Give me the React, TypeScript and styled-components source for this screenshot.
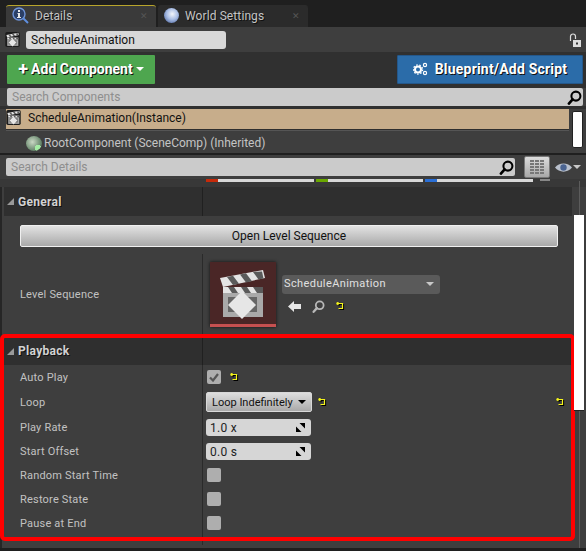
import React from 'react';
import styled, { createGlobalStyle } from 'styled-components';

const GlobalStyle = createGlobalStyle`
  html, body {
    margin: 0;
    padding: 0;
    background: #1f1f1f;
  }
  body {
    font-family: Roboto, "Liberation Sans", sans-serif;
    overflow: hidden;
  }
`;

const ResetArrow: React.FC = () => (
  <ResetIcon viewBox="0 0 9 9">
    <path d="M0.5 1.5h6v5h-4M0.5 1.5l2-1.5M0.5 1.5l2 1.5" fill="none" stroke="#000" strokeWidth="1.2" transform="translate(1 1)" />
    <path d="M0.5 1.5h6v5h-4M0.5 1.5l2-1.5M0.5 1.5l2 1.5" fill="none" stroke="#f4f41c" strokeWidth="1.2" />
  </ResetIcon>
);

const Loupe: React.FC<{ size: number; color?: string }> = ({ size, color = '#000' }) => (
  <svg width={size} height={size} viewBox="0 0 16 16">
    <circle cx="9.5" cy="6.5" r="4.8" fill="none" stroke={color} strokeWidth="2.2" />
    <path d="M6 10L2 14.5" stroke={color} strokeWidth="2.8" strokeLinecap="round" />
  </svg>
);

// same drawing for the small tree icons and the big thumbnail
const ClapperShapes: React.FC = () => (
  <>
    <path d="M10 16L53 8l2 8-42 9z" fill="#e4e4e4" />
    <path d="M17 15l6 8 6-1.300-6-8zM30 12.500l6 8 6-1.300-6-8zM43 10l5.500 7.500 5-1-1.500-7z" fill="#5a5a5a" />
    <path d="M13 31h40v24H13z" fill="#a9a9a9" />
    <path d="M13 25h40v6H13z" fill="#e4e4e4" />
    <path d="M18 25l4 6h6l-4-6zM31 25l4 6h6l-4-6zM43 25l4 6h6v-6z" fill="#5a5a5a" />
    <path d="M18 35h29v15H18z" fill="#666" />
    <path d="M32 29l14 14-14 14-14-14z" fill="#e6e6e6" />
  </>
);

const SmallClapper: React.FC = () => (
  <svg width="15" height="15" viewBox="6 5 52 54">
    <rect x="6" y="5" width="52" height="54" fill="#1c1c1c" rx="6" />
    <ClapperShapes />
  </svg>
);

const SmallCog: React.FC = () => (
  <svg width="15" height="14" viewBox="0 0 15 14">
    <circle cx="5" cy="7.500" r="3" fill="none" stroke="#fff" strokeWidth="2" />
    <circle cx="5" cy="7.500" r="4.600" fill="none" stroke="#fff" strokeWidth="1.200" strokeDasharray="1.600 1.600" />
    <circle cx="12" cy="3" r="1.600" fill="none" stroke="#fff" strokeWidth="1.200" />
    <circle cx="12" cy="11" r="1.600" fill="none" stroke="#fff" strokeWidth="1.200" />
  </svg>
);

const ResizeGrip: React.FC = () => (
  <GripIcon viewBox="0 0 9 9">
    <path d="M3.500 0H9v5.500zM5.500 9H0V3.500z" fill="#000" />
  </GripIcon>
);

const gridCells = [0, 1, 2, 3, 4].flatMap((row) =>
  [0, 1, 2].map((col) => ({ x: col * 5, y: row * 3 })),
);

const App: React.FC = () => {
  return (
    <Page>
      <GlobalStyle />
      <TabBar>
        <Tab active>
          <svg width="17" height="17" viewBox="0 0 17 17">
            <circle cx="7" cy="7" r="6" fill="#2b3f66" stroke="#6f94d8" strokeWidth="1.4" />
            <path d="M11 11l5 5" stroke="#5f8fe0" strokeWidth="2" />
            <path d="M6 3h2v2H6zM5.500 6H8v4h1v1H5v-1h1V7h-.5z" fill="#e8e8e8" />
          </svg>
          <TabLabel>Details</TabLabel>
          <TabClose>✕</TabClose>
        </Tab>
        <Tab>
          <Globe />
          <TabLabel>World Settings</TabLabel>
          <TabClose>✕</TabClose>
        </Tab>
      </TabBar>

      <NameRow>
        <SmallClapper />
        <NameInput>ScheduleAnimation</NameInput>
        <LockIcon viewBox="0 0 14 14">
          <path d="M2.500 8V3.500a2.500 2.500 0 0 1 5 0V6" fill="none" stroke="#ddd" strokeWidth="1.200" />
          <path d="M5 7h8v7H5z" fill="#ddd" />
          <path d="M8 9.500h2v2H8z" fill="#333" />
        </LockIcon>
      </NameRow>

      <ButtonRow>
        <AddButton>
          <PlusSign>+</PlusSign>
          Add Component
          <Caret color="#fff" />
        </AddButton>
        <BlueprintButton>
          <SmallCog />
          Blueprint/Add Script
        </BlueprintButton>
      </ButtonRow>

      <ComponentSearch>
        Search Components
        <Loupe size={15} />
      </ComponentSearch>

      <TreeArea>
        <TreeList>
          <SelectedRow>
            <SmallClapper />
            ScheduleAnimation(Instance)
          </SelectedRow>
          <RootRow>
            <SceneBall />
            RootComponent (SceneComp) (Inherited)
          </RootRow>
        </TreeList>
        <TreeScroll />
      </TreeArea>

      <DetailsBar>
        <DetailsSearch>
          Search Details
          <Loupe size={15} />
        </DetailsSearch>
        <GridToggle>
          <svg width="14" height="15" viewBox="0 0 14 15">
            {gridCells.map((c) => (
              <rect key={`${c.x}-${c.y}`} x={c.x} y={c.y} width="4" height="2" fill="#777" />
            ))}
          </svg>
        </GridToggle>
        <svg width="18" height="11" viewBox="0 0 18 11">
          <path d="M0 5.500C4 0 13 0 17 5.500 13 11 4 11 0 5.500z" fill="#b9c0cc" />
          <circle cx="8.500" cy="5.500" r="3.200" fill="#4a6390" />
        </svg>
        <Caret color="#c8c8c8" />
      </DetailsBar>

      <ChipStrip>
        <Chip color="#c62a0a" width={108} />
        <Chip color="#6aa800" width={107} />
        <Chip color="#2a6fd6" width={108} />
        <ChipStub />
      </ChipStrip>

      <Panel>
        <ScrollTrack />
        <SectionHeader>
          <Disclosure />
          <SectionName>General</SectionName>
        </SectionHeader>
        <OpenRow>
          <OpenButton>Open Level Sequence</OpenButton>
        </OpenRow>
        <SequenceRow>
          <PropName>Level Sequence</PropName>
          <SequenceValue>
            <Thumbnail>
              <svg width="66" height="62" viewBox="0 0 66 62">
                <ClapperShapes />
              </svg>
            </Thumbnail>
            <AssetColumn>
              <AssetCombo>
                ScheduleAnimation
                <Caret color="#c8c8c8" />
              </AssetCombo>
              <AssetTools>
                <svg width="13" height="11" viewBox="0 0 13 11">
                  <path d="M0 5.500L6 0v3h7v5H6v3z" fill="#e6e6e6" />
                </svg>
                <Loupe size={13} color="#b8b8b8" />
                <ResetArrow />
              </AssetTools>
            </AssetColumn>
          </SequenceValue>
        </SequenceRow>

        <PlaybackBlock>
          <PlaybackHeader>
            <Disclosure />
            <SectionName>Playback</SectionName>
          </PlaybackHeader>
          <PropRow>
            <PropName>Auto Play</PropName>
            <ValueCell>
              <CheckBox>
                <svg width="10" height="9" viewBox="0 0 10 9">
                  <path d="M1 4.500l3 3L9 1" fill="none" stroke="#555" strokeWidth="2.200" />
                </svg>
              </CheckBox>
              <ResetArrow />
            </ValueCell>
          </PropRow>
          <PropRow rowHeight={26}>
            <PropName>Loop</PropName>
            <ValueCell>
              <LoopSelect>
                Loop Indefinitely
                <Caret color="#000" />
              </LoopSelect>
              <ResetArrow />
              <FarReset>
                <ResetArrow />
              </FarReset>
            </ValueCell>
          </PropRow>
          <PropRow rowHeight={25}>
            <PropName>Play Rate</PropName>
            <ValueCell>
              <NumberBox>
                1.0 x
                <ResizeGrip />
              </NumberBox>
            </ValueCell>
          </PropRow>
          <PropRow rowHeight={23}>
            <PropName>Start Offset</PropName>
            <ValueCell>
              <NumberBox>
                0.0 s
                <ResizeGrip />
              </NumberBox>
            </ValueCell>
          </PropRow>
          <PropRow>
            <PropName>Random Start Time</PropName>
            <ValueCell>
              <CheckBox />
            </ValueCell>
          </PropRow>
          <PropRow>
            <PropName>Restore State</PropName>
            <ValueCell>
              <CheckBox />
            </ValueCell>
          </PropRow>
          <PropRow>
            <PropName>Pause at End</PropName>
            <ValueCell>
              <CheckBox />
            </ValueCell>
          </PropRow>
          <DividerTail tailHeight={6} />
          <RedFrame />
        </PlaybackBlock>
        <DividerTail tailHeight={4} />
        <PanelScroll />
      </Panel>
      <BottomStrip />
    </Page>
  );
};

export default App;

const Page = styled.div`
  width: 586px;
  height: 551px;
  overflow: hidden;
  background: #3e3e3e;
  display: flex;
  flex-direction: column;
`;

const TabBar = styled.div`
  height: 27px;
  flex: none;
  box-sizing: border-box;
  padding: 5px 0 0 6px;
  background: #1f1f1f;
  display: flex;
  gap: 2px;
`;

const Tab = styled.div<{ active?: boolean }>`
  width: 150px;
  box-sizing: border-box;
  padding: 0 8px 2px 6px;
  display: flex;
  align-items: center;
  gap: 6px;
  background: ${({ active }) => (active ? '#3a3a3a' : '#2b2b2b')};
  border-top: 1px solid ${({ active }) => (active ? '#b8a52c' : '#2b2b2b')};
  border-radius: 3px 3px 0 0;
`;

const TabLabel = styled.span`
  flex: 1;
  font-size: 12px;
  letter-spacing: 0.1px;
  color: #c4c4c4;
  text-shadow: 1px 1px 0 #111;
`;

const TabClose = styled.span`
  font-size: 9px;
  color: #555;
`;

const Globe = styled.span`
  width: 15px;
  height: 15px;
  border-radius: 50%;
  background: radial-gradient(circle at 55% 40%, #f2f5fb 0, #a9bde4 45%, #34508f 100%);
`;

const NameRow = styled.div`
  height: 25px;
  flex: none;
  box-sizing: border-box;
  padding: 0 4px 0 5px;
  display: flex;
  align-items: center;
  gap: 6px;
  background: #3e3e3e;
`;

const NameInput = styled.div`
  width: 200px;
  height: 18px;
  box-sizing: border-box;
  padding-left: 5px;
  background: #d8d8d8;
  border-radius: 3px;
  font-size: 12px;
  line-height: 18px;
  color: #111;
`;

const LockIcon = styled.svg`
  width: 14px;
  height: 14px;
  margin-left: auto;
`;

const ButtonRow = styled.div`
  height: 36px;
  flex: none;
  box-sizing: border-box;
  padding: 3px 3px 4px 7px;
  display: flex;
  justify-content: space-between;
  background: #303030;
`;

const ActionButton = styled.div`
  height: 29px;
  box-sizing: border-box;
  padding-bottom: 2px;
  display: flex;
  align-items: center;
  justify-content: center;
  font-size: 14px;
  font-weight: 700;
  color: #fff;
  text-shadow: 1px 1px 0 #111;
  border-radius: 1px;
`;

const AddButton = styled(ActionButton)`
  width: 148px;
  gap: 3px;
  background: #4ea64f;
`;

const BlueprintButton = styled(ActionButton)`
  width: 186px;
  gap: 7px;
  letter-spacing: 0.2px;
  background: #2b6ca9;
  border: 1px solid #24578a;
`;

const PlusSign = styled.span`
  font-size: 18px;
  line-height: 18px;
  font-weight: 700;
`;

const Caret = styled.span<{ color: string }>`
  width: 0;
  height: 0;
  border-left: 4px solid transparent;
  border-right: 4px solid transparent;
  border-top: 4px solid ${({ color }) => color};
`;

const SearchBox = styled.div`
  height: 18px;
  flex: none;
  box-sizing: border-box;
  display: flex;
  align-items: center;
  justify-content: space-between;
  padding: 0 1px 0 5px;
  background: #cbcbcb;
  border-radius: 2px;
  font-size: 12px;
  color: #8e8e8e;
`;

const ComponentSearch = styled(SearchBox)`
  margin: 0 3px 0 7px;
`;

const TreeArea = styled.div`
  display: flex;
  flex: none;
  height: 49px;
  background: #3e3e3e;
  border-top: 3px solid #303030;
  border-bottom: 2px solid #1f1f1f;
  box-sizing: border-box;
  padding: 0 3px 0 6px;
  gap: 3px;
`;

const TreeList = styled.div`
  flex: 1;
  display: flex;
  flex-direction: column;
`;

const SelectedRow = styled.div`
  height: 20px;
  box-sizing: border-box;
  padding-bottom: 3px;
  display: flex;
  align-items: center;
  gap: 7px;
  background: #c7ad8b;
  box-shadow: 0 1px 0 #2e2e2e, 0 2px 0 #555;
  font-size: 12px;
  color: #111;
`;

const RootRow = styled.div`
  flex: 1;
  display: flex;
  align-items: center;
  gap: 2px;
  padding: 4px 0 0 20px;
  font-size: 12px;
  color: #c4c4c4;
`;

const SceneBall = styled.span`
  width: 16px;
  height: 15px;
  border-radius: 50%;
  background:
    radial-gradient(circle at 12px 12px, #a4eda4 3px, transparent 3.500px),
    radial-gradient(circle at 40% 40%, #c9d8c4, #587a5e 75%);
`;

const TreeScroll = styled.div`
  width: 11px;
  margin: 2px 0 5px;
  background: #fff;
  border: 1px solid #222;
  border-radius: 2px;
  box-sizing: border-box;
`;

const DetailsBar = styled.div`
  height: 24px;
  flex: none;
  box-sizing: border-box;
  padding: 1px 3px 1px 6px;
  display: flex;
  align-items: center;
  background: #3e3e3e;
`;

const DetailsSearch = styled(SearchBox)`
  width: 509px;
`;

const GridToggle = styled.div`
  width: 26px;
  height: 22px;
  margin: 0 5px 0 9px;
  box-sizing: border-box;
  display: flex;
  align-items: center;
  justify-content: center;
  background: linear-gradient(#dcdcdc, #a8a8a8);
  border: 1px solid #777;
  border-radius: 2px;
`;

const ChipStrip = styled.div`
  height: 8px;
  flex: none;
  box-sizing: border-box;
  padding-left: 206px;
  display: flex;
  gap: 2px;
  background: #383838;
`;

const Chip = styled.span<{ color: string; width: number }>`
  width: ${({ width }) => width}px;
  height: 3px;
  background: linear-gradient(90deg, ${({ color }) => color} 12px, #d8d8d8 12px);
`;

const ChipStub = styled.span`
  width: 10px;
  height: 2px;
  margin-left: 5px;
  background: #888;
`;

const Panel = styled.div`
  position: relative;
  flex: 1;
  min-height: 0;
  padding: 0 14px 0 2px;
  border-left: 2px solid #262626;
  background: #3e3e3e;
`;

const ScrollTrack = styled.div`
  position: absolute;
  right: 6px;
  top: -6px;
  bottom: 0;
  width: 1px;
  background: #5c5c5c;
`;

const SectionHeader = styled.div`
  height: 29px;
  display: flex;
  align-items: center;
  gap: 4px;
  padding-left: 3px;
  background: #2f2f2f;
  background-image: linear-gradient(#202020, #202020);
  background-repeat: no-repeat;
  background-size: 1px 100%;
  background-position: 198px 0;
`;

const PlaybackHeader = styled(SectionHeader)`
  height: 27px;
  padding-bottom: 1px;
  box-sizing: border-box;
`;

const Disclosure = styled.span`
  width: 0;
  height: 0;
  border-left: 7px solid transparent;
  border-bottom: 7px solid #9a9a9a;
`;

const SectionName = styled.span`
  font-size: 12px;
  font-weight: 700;
  letter-spacing: 0.3px;
  color: #d2d2d2;
  text-shadow: 1px 1px 0 #111;
`;

const OpenRow = styled.div`
  padding: 9px 0 7px 16px;
`;

const OpenButton = styled.div`
  width: 538px;
  height: 22px;
  box-sizing: border-box;
  text-align: center;
  line-height: 20px;
  font-size: 12px;
  color: #111;
  background: linear-gradient(#e2e2e2, #a9a9a9);
  border: 1px solid #f0f0f0;
  border-radius: 2px;
`;

const SequenceRow = styled.div`
  height: 80px;
  display: flex;
  align-items: center;
`;

const PropName = styled.div`
  width: 182px;
  padding-left: 16px;
  font-size: 11px;
  letter-spacing: 0.2px;
  color: #c2c2c2;
`;

const SequenceValue = styled.div`
  flex: 1;
  display: flex;
  align-items: center;
  gap: 6px;
  height: 100%;
  padding-left: 7px;
  border-left: 1px solid #2a2a2a;
`;

const Thumbnail = styled.div`
  width: 66px;
  height: 65px;
  box-sizing: border-box;
  display: flex;
  align-items: center;
  justify-content: center;
  background: #4a2626;
  border-bottom: 3px solid #c65050;
  box-shadow: 0 0 3px #111;
`;

const AssetColumn = styled.div`
  display: flex;
  flex-direction: column;
  gap: 6px;
`;

const AssetCombo = styled.div`
  width: 158px;
  height: 19px;
  box-sizing: border-box;
  padding: 0 6px 2px 2px;
  display: flex;
  align-items: center;
  justify-content: space-between;
  background: #5a5a5a;
  border-radius: 3px;
  font-size: 11px;
  letter-spacing: 0.4px;
  color: #e0e0e0;
`;

const AssetTools = styled.div`
  display: flex;
  align-items: center;
  gap: 11px;
  padding-left: 6px;
`;

const PlaybackBlock = styled.div`
  position: relative;
  padding-top: 4px;
`;

const PropRow = styled.div<{ rowHeight?: number }>`
  height: ${({ rowHeight }) => rowHeight ?? 24}px;
  display: flex;
  align-items: center;
`;

const ValueCell = styled.div`
  flex: 1;
  height: 100%;
  display: flex;
  align-items: center;
  gap: 6px;
  padding-left: 3px;
  border-left: 1px solid #2a2a2a;
`;

const FarReset = styled.span`
  margin-left: auto;
  margin-right: 7px;
  display: flex;
`;

const ResetIcon = styled.svg`
  width: 9px;
  height: 9px;
`;

const CheckBox = styled.div`
  width: 14px;
  height: 14px;
  margin: 0 3px 0 1px;
  display: flex;
  align-items: center;
  justify-content: center;
  background: #aeaeae;
  border-radius: 2px;
`;

const LoopSelect = styled.div`
  width: 106px;
  height: 20px;
  box-sizing: border-box;
  padding: 0 5px;
  display: flex;
  align-items: center;
  justify-content: space-between;
  background: linear-gradient(#dedede, #a9a9a9);
  border: 1px solid #d8d8d8;
  border-radius: 2px;
  font-size: 11px;
  color: #111;
`;

const NumberBox = styled.div`
  width: 105px;
  height: 17px;
  box-sizing: border-box;
  padding: 0 6px 0 4px;
  display: flex;
  align-items: center;
  justify-content: space-between;
  background: #d6d6d6;
  border-radius: 3px;
  font-size: 12px;
  letter-spacing: 0.3px;
  color: #222;
`;

const GripIcon = styled.svg`
  width: 9px;
  height: 9px;
`;

const DividerTail = styled.div<{ tailHeight: number }>`
  height: ${({ tailHeight }) => tailHeight}px;
  margin-left: 198px;
  border-left: 1px solid #2a2a2a;
`;

const RedFrame = styled.div`
  position: absolute;
  left: -4px;
  top: 0;
  bottom: 0;
  width: 575px;
  box-sizing: border-box;
  border: 4px solid #ff0000;
  border-radius: 5px;
  pointer-events: none;
`;

const PanelScroll = styled.div`
  position: absolute;
  right: 2px;
  top: 28px;
  width: 10px;
  height: 195px;
  background: #fff;
  box-shadow: 0 1px 0 #222;
`;

const BottomStrip = styled.div`
  height: 3px;
  flex: none;
  background: #1f1f1f;
`;
